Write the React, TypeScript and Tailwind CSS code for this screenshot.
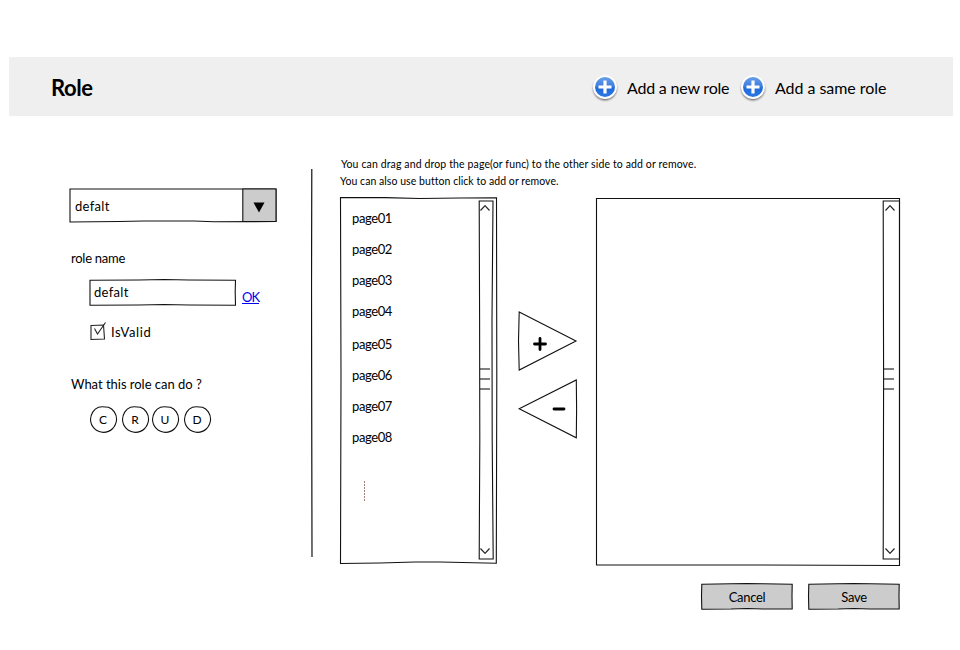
import type { ReactNode } from "react";

/** Outline drawn by hand: fills its parent, which is the box of w x h pixels. */
function Sketch({ w, h, d, fill = "none" }: { w: number; h: number; d: string; fill?: string }) {
  return (
    <svg
      className="pointer-events-none absolute inset-0 overflow-visible"
      width={w}
      height={h}
      viewBox={`0 0 ${w} ${h}`}
      fill={fill}
      stroke="#111"
      strokeWidth="1.1"
    >
      <path d={d} />
    </svg>
  );
}

function AddIcon({ id }: { id: string }) {
  return (
    <svg width="28" height="30" viewBox="0 0 28 30" className="-mt-[2px] -ml-px shrink-0">
      <defs>
        <linearGradient id={id} x1="0" y1="0" x2="0" y2="1">
          <stop offset="0" stopColor="#6a9fe8" />
          <stop offset="0.5" stopColor="#3a7bdd" />
          <stop offset="0.55" stopColor="#2069d8" />
          <stop offset="1" stopColor="#2a78e4" />
        </linearGradient>
        <filter id={`${id}s`} x="-30%" y="-30%" width="160%" height="160%">
          <feGaussianBlur stdDeviation="1" />
        </filter>
      </defs>
      <circle cx="14" cy="15.6" r="11.6" fill="#000" opacity="0.6" filter={`url(#${id}s)`} />
      <circle cx="14" cy="14" r="12" fill="#fff" />
      <circle cx="14" cy="14" r="10" fill={`url(#${id})`} />
      <path d="M14 7.5v13M7.500 14h13" stroke="#fff" strokeWidth="3.2" />
    </svg>
  );
}

function ScrollBar({ w, outline }: { w: number; outline: string }) {
  return (
    <div className="relative flex h-[359px] shrink-0 flex-col items-center justify-between" style={{ width: w }}>
      <Sketch w={w} h={359} d={outline} />
      <svg width="10" height="6" viewBox="0 0 10 6" className="mt-[5px] -ml-[3px]" fill="none" stroke="#222" strokeWidth="1.2">
        <path d="M0.5 5.5L5 0.7L9.5 5.5" />
      </svg>
      <div className="-mt-px flex w-full flex-col gap-2 pl-[1px]">
        <div className="h-[2px] w-2.5 bg-[#808080]" />
        <div className="h-[2px] w-2.5 bg-[#808080]" />
        <div className="h-[2px] w-2.5 bg-[#808080]" />
      </div>
      <svg width="10" height="6" viewBox="0 0 10 6" className="mb-[5px] -ml-[3px]" fill="none" stroke="#222" strokeWidth="1.2">
        <path d="M0.5 0.5L5 5.3L9.5 0.5" />
      </svg>
    </div>
  );
}

function Letter({ children }: { children: ReactNode }) {
  return (
    <button className="relative flex h-[27px] w-[27px] items-center justify-center text-[12px]">
      <Sketch
        w={27}
        h={27}
        d="M8.500 1.200C11 .3 16 .9 18.500 1.200C23 2.800 26.800 8 26.600 13.500C26 21 20.500 26.400 13.500 26.400C6.500 26.300 .8 21 .5 13.500C.6 8.500 3.600 3 8.500 1.200Z"
      />
      <span className="relative pt-px">{children}</span>
    </button>
  );
}

function ActionButton({ children }: { children: ReactNode }) {
  return (
    <button className="relative flex h-[27px] w-[92px] shrink-0 items-center justify-center text-[13px] tracking-[-0.3px]">
      <Sketch w={92} h={27} fill="#ccc" d="M.8 1.200L30 .8L46 .5L62 .8L91.200 1.200L91 13L91.200 26L62 26L46 25.500L30 26L.8 26.200L.5 13Z" />
      <span className="relative pt-[2px]">{children}</span>
    </button>
  );
}

const pages = ["page01", "page02", "page03", "page04", "page05", "page06", "page07", "page08"];

export default function App() {
  return (
    <div className="h-[650px] w-[960px] overflow-hidden bg-white pt-[57px] font-['Comic_Sans_MS','Lato',sans-serif] text-[13px] text-black">
      <header className="ml-[9px] flex h-[59px] w-[944px] items-center bg-[#efefef] pl-[42px]">
        <h1 className="w-[541px] pt-[3px] text-[22px] leading-7 font-bold tracking-[-0.4px]">Role</h1>
        <div className="flex w-[148px] items-center pt-[4px]">
          <AddIcon id="a" />
          <span className="-mt-px ml-[8px] text-[16px] tracking-[-0.2px] whitespace-nowrap">Add a new role</span>
        </div>
        <div className="flex items-center pt-[4px]">
          <AddIcon id="b" />
          <span className="-mt-px ml-[8px] text-[16px] tracking-[-0.05px] whitespace-nowrap">Add a same role</span>
        </div>
      </header>

      <main className="flex">
        <section className="w-[311px] shrink-0 pt-[72px] pl-[69px]">
          <div className="relative flex h-[34px] w-[207px] items-center justify-between">
            <Sketch w={207} h={34} d="M1 1H207L207 17L207 33.500L145 33.800L125 33L75 33L50 33.500L1 34L1 17Z" />
            <span className="relative pt-[3px] pl-[6px] tracking-[0.3px]">defalt</span>
            <div className="relative flex h-[34px] w-[34px] items-center justify-center">
              <Sketch w={34} h={34} fill="#ccc" d="M.8 1H34V33.500H.8Z" />
              <svg width="12" height="11" viewBox="0 0 12 11" className="relative mt-[4px]">
                <path d="M.5 .5H11.500L6 10.500Z" />
              </svg>
            </div>
          </div>

          <div className="mt-[26px] pl-[2px] leading-5 tracking-[-0.25px]">role name</div>

          <div className="mt-[11px] flex pl-5">
            <div className="relative flex h-[27px] w-[147px] items-center">
              <Sketch w={147} h={27} d="M1 1.200L50 1L75 .5L100 1L146.500 1.200L146.200 13L146.500 26.200L100 26L75 25.500L50 26L1 26.200L1 13Z" />
              <span className="relative pt-[1px] pl-[5px] tracking-[0.3px]">defalt</span>
            </div>
            <a className="mt-[10px] ml-[6px] h-[15px] border-b border-[#0000ee] text-[13px] leading-4 tracking-[-0.9px] text-[#0000ee]">OK</a>
          </div>

          <div className="mt-[15px] flex h-5 items-center pl-[21px]">
            <svg width="17" height="20" viewBox="0 0 17 20" fill="none" stroke="#222" strokeWidth="1.100">
              <path d="M1 4.500L13.500 4L14.500 18L1 18.500Z" />
              <path d="M4.500 7.500L7.500 13L15.500 1.500" />
            </svg>
            <span className="ml-[4px] pt-[4px] tracking-[0.6px]">IsValid</span>
          </div>

          <div className="mt-[33px] pl-[2px] leading-5 tracking-[-0.02px]">What this role can do ?</div>

          <div className="mt-[12px] flex gap-[5px] pl-[20.5px]">
            <Letter>C</Letter>
            <Letter>R</Letter>
            <div className="-ml-[2px]"><Letter>U</Letter></div>
            <Letter>D</Letter>
          </div>
        </section>

        <svg width="3" height="388" viewBox="0 0 3 388" className="mt-[53px] shrink-0" fill="none" stroke="#111" strokeWidth="1.200">
          <path d="M.8 0L.5 120L1 388" />
        </svg>

        <section className="w-[590px] shrink-0 pt-[40px] pl-[26px]">
          <p className="h-[17px] pl-[1px] text-[10.5px] leading-[17px] tracking-[0.13px] whitespace-nowrap">
            You can drag and drop the page(or func) to the other side to add or remove.
          </p>
          <p className="h-[24px] text-[10.5px] leading-[16px] tracking-[0.05px] whitespace-nowrap">
            You can also use button click to add or remove.
          </p>

          <div className="flex">
            <div className="relative flex h-[367px] w-[157px] shrink-0 justify-between pt-[3px] pr-[3px]">
              <Sketch w={157} h={367} d="M.5 .5L45 .6L80 1.500L120 1L156.500 .8L156.800 180L156.300 366.200L100 365L75 365L40 366L.5 366.500L1 180Z" />
              <div className="relative pl-3">
                <ul className="pt-[3px]">
                  {pages.map((page) => (
                    <li key={page} className="h-[31px] leading-[31px] tracking-[-0.4px] nth-[4]:h-[33px]">
                      {page}
                    </li>
                  ))}
                </ul>
                <svg width="1" height="20" viewBox="0 0 1 20" className="mt-[28px] ml-[12px]" stroke="#400" strokeWidth="1" strokeDasharray="1 2">
                  <path d="M.5 .5V20" />
                </svg>
              </div>
              <ScrollBar w={15} outline="M.2 1H14L13 120L13.200 240L14.200 359H.2L.8 240L.6 120Z" />
            </div>

            <div className="ml-[21px] flex w-[61px] shrink-0 flex-col gap-[8px] pt-[114px]">
              <button className="relative flex h-[60px] w-[60px] items-center pl-[15px]">
                <Sketch w={60} h={60} d="M1.200 1L58 30L1.200 59L.5 30Z" />
                <svg width="14" height="14" viewBox="0 0 14 14" className="relative mt-[5px]" stroke="#000" strokeWidth="2.800" strokeLinecap="round">
                  <path d="M1.500 7H12.500M7 1.500V12.500" />
                </svg>
              </button>
              <button className="relative flex h-[60px] w-[60px] items-center pl-[34px]">
                <Sketch w={60} h={60} d="M58.300 1L58.600 30L58.300 58.800L1.200 29.800Z" />
                <svg width="14" height="4" viewBox="0 0 14 4" className="relative" stroke="#000" strokeWidth="2.800" strokeLinecap="round">
                  <path d="M2 2H12" />
                </svg>
              </button>
            </div>

            <div className="relative ml-[17px] flex h-[369px] w-[304px] shrink-0 justify-end pt-[3px]">
              <Sketch w={304} h={369} d="M.5 1.500H303.500V368.500L150 368L.5 368Z" />
              <ScrollBar w={17} outline="M.2 1H16.500V359H.2L.6 180Z" />
            </div>
          </div>

          <div className="mt-[17px] ml-[361px] flex gap-[15px]">
            <ActionButton>Cancel</ActionButton>
            <ActionButton>Save</ActionButton>
          </div>
        </section>
      </main>
    </div>
  );
}
